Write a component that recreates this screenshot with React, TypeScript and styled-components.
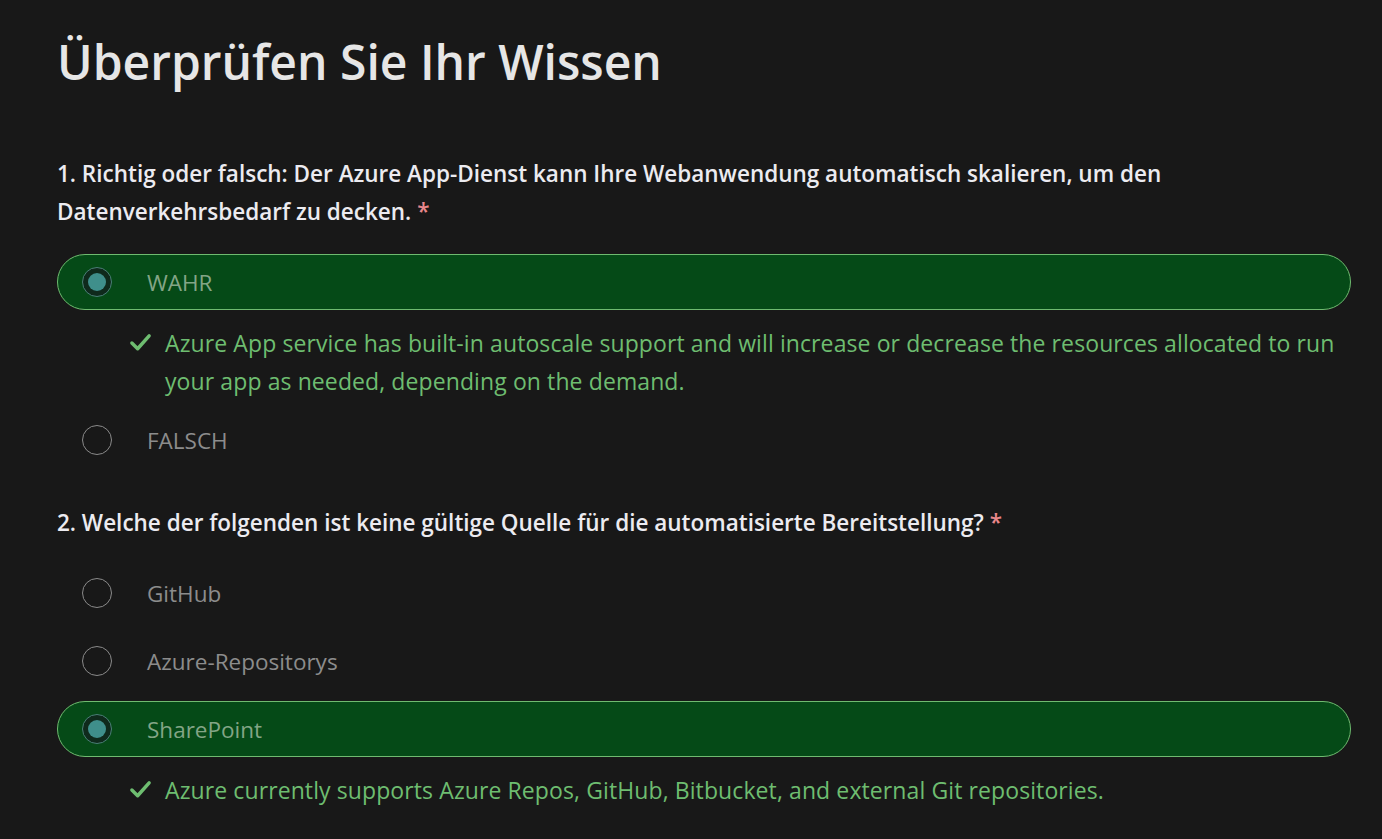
import React from 'react';
import styled, { createGlobalStyle } from 'styled-components';

const GlobalStyle = createGlobalStyle`
  html, body {
    margin: 0;
    padding: 0;
    background: #181818;
  }
  body {
    font-family: "Open Sans", "Noto Sans", "Liberation Sans", sans-serif;
  }
`;

const Page = styled.main`
  min-height: 839px;
  box-sizing: border-box;
  padding: 22px 31px 0 57px;
  background: #181818;
  color: #e6e6e6;
`;

const Title = styled.h1`
  margin: 0 0 53px;
  font-size: 48px;
  font-weight: 600;
  line-height: 80px;
  color: #e6e6e6;
`;

const Question = styled.section`
  display: flex;
  flex-direction: column;
  margin-bottom: 36px;
`;

const Prompt = styled.p`
  margin: 0 0 23px;
  font-size: 22.5px;
  font-weight: 600;
  line-height: 38px;
  color: #ecebf0;
`;

const Required = styled.span`
  margin-left: 6px;
  color: #e8878b;
`;

const Options = styled.div`
  display: flex;
  flex-direction: column;
  gap: 12px;
`;

const Option = styled.div<{ $selected?: boolean }>`
  display: flex;
  align-items: center;
  gap: 35px;
  height: 56px;
  box-sizing: border-box;
  padding-left: 24px;
  border-radius: 28px;
  border: 1px solid ${p => (p.$selected ? '#6fbb70' : 'transparent')};
  background: ${p => (p.$selected ? '#054a17' : 'transparent')};
`;

const Radio = styled.span<{ $checked?: boolean }>`
  width: 30px;
  height: 30px;
  box-sizing: border-box;
  border-radius: 50%;
  border: 1px solid ${p => (p.$checked ? '#4a7f76' : '#8a8a8a')};
  background: ${p => (p.$checked ? '#0f2a1c' : 'transparent')};
  display: flex;
  align-items: center;
  justify-content: center;
  flex-shrink: 0;

  &::after {
    content: '';
    display: ${p => (p.$checked ? 'block' : 'none')};
    width: 18px;
    height: 18px;
    border-radius: 50%;
    background: #3f8f8b;
  }
`;

const Label = styled.span<{ $selected?: boolean }>`
  font-size: 22.5px;
  color: ${p => (p.$selected ? '#83a586' : '#8c8c8c')};
`;

const Feedback = styled.div`
  display: flex;
  gap: 13px;
  margin: 14px 0 0 72px;
`;

const Check = styled.svg`
  width: 23px;
  height: 23px;
  flex-shrink: 0;
  margin-top: 7px;
`;

const FeedbackText = styled.p`
  margin: 0;
  font-size: 23px;
  font-weight: 500;
  line-height: 38px;
  letter-spacing: 0.1px;
  color: #6ebd70;
`;

type Choice = { label: string; selected?: boolean; feedback?: string };

const questions: { prompt: string; choices: Choice[] }[] = [
  {
    prompt:
      '1. Richtig oder falsch: Der Azure App-Dienst kann Ihre Webanwendung automatisch skalieren, um den Datenverkehrsbedarf zu decken.',
    choices: [
      {
        label: 'WAHR',
        selected: true,
        feedback:
          'Azure App service has built-in autoscale support and will increase or decrease the resources allocated to run your app as needed, depending on the demand.',
      },
      { label: 'FALSCH' },
    ],
  },
  {
    prompt: '2. Welche der folgenden ist keine gültige Quelle für die automatisierte Bereitstellung?',
    choices: [
      { label: 'GitHub' },
      { label: 'Azure-Repositorys' },
      {
        label: 'SharePoint',
        selected: true,
        feedback: 'Azure currently supports Azure Repos, GitHub, Bitbucket, and external Git repositories.',
      },
    ],
  },
];

const CheckIcon = () => (
  <Check viewBox="0 0 24 24">
    <path d="M3 12.5l6 6L21 5" fill="none" stroke="#6ebd70" strokeWidth="3.6" strokeLinecap="round" strokeLinejoin="round" />
  </Check>
);

export default function App() {
  return (
    <>
      <GlobalStyle />
      <Page>
        <Title>Überprüfen Sie Ihr Wissen</Title>
        {questions.map(q => (
          <Question key={q.prompt}>
            <Prompt>
              {q.prompt}
              <Required>*</Required>
            </Prompt>
            <Options>
              {q.choices.map(c => (
                <div key={c.label}>
                  <Option $selected={c.selected}>
                    <Radio $checked={c.selected} />
                    <Label $selected={c.selected}>{c.label}</Label>
                  </Option>
                  {c.feedback && (
                    <Feedback>
                      <CheckIcon />
                      <FeedbackText>{c.feedback}</FeedbackText>
                    </Feedback>
                  )}
                </div>
              ))}
            </Options>
          </Question>
        ))}
      </Page>
    </>
  );
}
